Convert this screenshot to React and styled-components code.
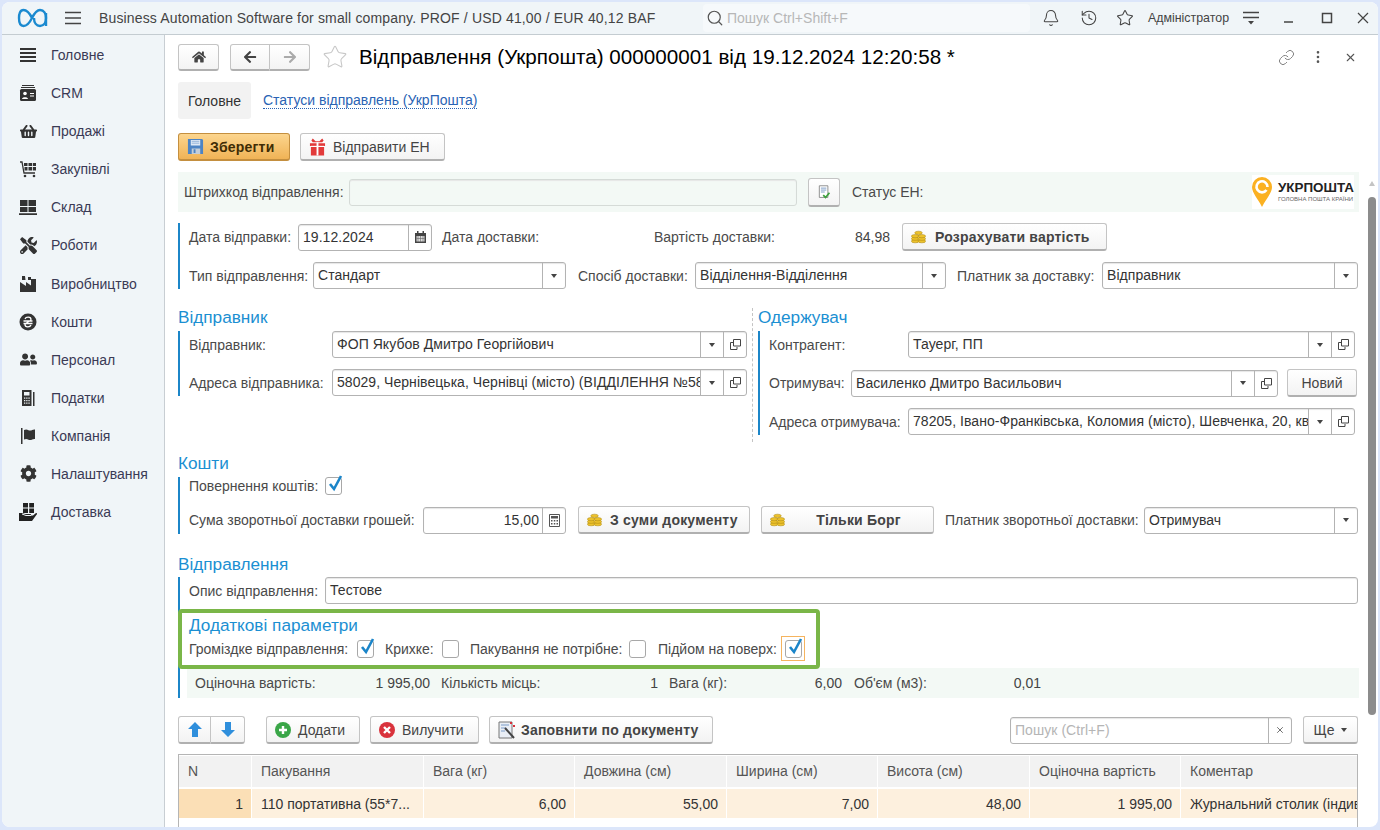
import React from 'react'
import styled, { createGlobalStyle } from 'styled-components'
import { Bell, History, Star, Search, Link, EllipsisVertical, X } from 'lucide-react'
import { FaShoppingBasket, FaTools, FaUserFriends, FaCog, FaHome, FaArrowLeft, FaArrowRight } from 'react-icons/fa'

const Global = createGlobalStyle`
  * { box-sizing: border-box; }
  html, body { margin: 0; padding: 0; width: 1380px; height: 830px; overflow: hidden; }
  body { font-family: "Liberation Sans", Arial, sans-serif; font-size: 14px; color: #444; }
`

const Frame = styled.div`
  width: 1380px;
  height: 830px;
  padding: 2px 2px 3px 2px;
  background: #dce6fa;
`
const Window = styled.div`
  height: 100%;
  display: flex;
  flex-direction: column;
  background: #fff;
  border-radius: 8px;
  overflow: hidden;
`
const TopBar = styled.header`
  height: 33px;
  flex: none;
  display: flex;
  align-items: center;
  background: #f0f5f8;
  border-bottom: 1px solid #c4ccd1;
  padding-left: 14px;
  color: #444;
  overflow: hidden;
`
const HeadTitle = styled.div`
  flex: none;
  width: 604px;
  margin-left: 3px;
  font-size: 14px;
  letter-spacing: 0.15px;
  white-space: nowrap;
`
const GlobalSearch = styled.div`
  flex: none;
  width: 327px;
  height: 28px;
  display: flex;
  align-items: center;
  gap: 3px;
  padding-left: 3px;
  border-radius: 4px;
  background: #f6f9fb;
  color: #b7b7b7;
  font-size: 14px;
  svg { color: #555; }
`
const TopIcon = styled.span`
  display: flex;
  justify-content: center;
  align-items: center;
  flex: none;
  width: ${p => p.$w || 37}px;
  color: #444;
`
const UserName = styled.span`
  flex: none;
  width: 90px;
  margin-left: 4px;
  font-size: 12.4px;
  color: #444;
  white-space: nowrap;
`
const Body = styled.div`
  flex: 1;
  min-height: 0;
  display: flex;
`
const Sidebar = styled.nav`
  width: 163px;
  flex: none;
  padding-top: 1px;
  background: #f0f5f8;
  border-right: 1px solid #c8ced3;
`
const NavItem = styled.div`
  height: 38.08px;
  display: flex;
  align-items: center;
  padding-left: 17px;
  gap: 14px;
  color: #3a3a55;
  font-size: 14px;
`
const NavIcon = styled.span`
  width: 18px;
  display: flex;
  justify-content: center;
  color: #333;
  font-size: 17px;
`
const Content = styled.main`
  flex: 1;
  min-width: 0;
  position: relative;
  overflow: hidden;
  padding: 9px 20px 0 13px;
`
const HeaderRow = styled.div`
  display: flex;
  align-items: center;
  height: 26px;
  margin-right: -8px;
`
const Title = styled.h1`
  margin: 0 0 0 11px;
  flex: 1;
  font-size: 20.65px;
  font-weight: 400;
  color: #000;
  white-space: nowrap;
`
const PlainIcon = styled.span`
  display: flex;
  justify-content: ${p => p.$end ? 'flex-end' : 'center'};
  width: ${p => p.$w || 32}px;
  color: #777;
`
const Btn = styled.button`
  display: flex;
  align-items: center;
  justify-content: ${p => p.$left ? 'flex-start' : 'center'};
  gap: ${p => p.$gap ?? 7}px;
  flex: none;
  width: ${p => p.$w}px;
  height: ${p => p.$h || 28}px;
  margin-left: ${p => p.$ml || 0}px;
  padding: 0 8px;
  font: ${p => p.$bold ? 700 : 400} 14px "Liberation Sans", Arial, sans-serif;
  letter-spacing: ${p => p.$bold ? '0.2px' : '0'};
  color: #444;
  background: linear-gradient(#fff, #f3f3f3);
  border: 1px solid #c4c4c4;
  border-bottom: 2px solid #b0b0b0;
  border-radius: 3px;
`
const SaveBtn = styled(Btn)`
  background: linear-gradient(#fcd58e, #f0b356);
  border-color: #c48f3f;
  color: #402c05;
`
const BtnCaption = styled.span`
  margin: 0 auto;
`
const BtnGroup = styled.div`
  display: flex;
  margin-left: ${p => p.$ml || 0}px;
  ${Btn} { border-radius: 0; }
  ${Btn}:first-child { border-radius: 3px 0 0 3px; }
  ${Btn}:last-child { border-radius: 0 3px 3px 0; border-left: 0; }
`
const Tabs = styled.div`
  display: flex;
  align-items: center;
  height: 37px;
  margin-top: 12px;
`
const ActiveTab = styled.div`
  width: 73px;
  height: 37px;
  display: flex;
  align-items: center;
  justify-content: center;
  background: #f2f2f2;
  border-radius: 3px;
  color: #333;
`
const TabLink = styled.a`
  margin-left: 12px;
  color: #2a63b4;
  border-bottom: 1px dotted #2a63b4;
  line-height: 15px;
`
const CommandBar = styled.div`
  display: flex;
  margin-top: 14px;
`
const Band = styled.div`
  display: flex;
  align-items: center;
  height: 40px;
  margin-top: 11px;
  margin-right: -1px;
  padding-left: 6px;
  background: #f3f9f5;
`
const Logo = styled.div`
  width: 102px;
  height: 34px;
  margin-left: auto;
  margin-right: 5px;
  display: flex;
  align-items: center;
  gap: 6px;
  background: #fff;
`
const LogoText = styled.div`
  display: flex;
  flex-direction: column;
  color: #222;
  font-size: 13.4px;
  font-weight: 700;
  line-height: 14px;
  white-space: nowrap;
  small { font-size: 6px; font-weight: 400; line-height: 8px; color: #666; }
`
const Group = styled.section`
  display: flex;
  flex-direction: column;
  gap: ${p => p.$gap ?? 11}px;
  margin-top: ${p => p.$mt || 0}px;
  padding-left: 9px;
  border-left: 2px solid #1c86c8;
`
const Row = styled.div`
  display: flex;
  align-items: center;
  min-height: ${p => p.$h || 27}px;
`
const Label = styled.span`
  flex: none;
  width: ${p => p.$w ? p.$w + 'px' : 'auto'};
  margin-left: ${p => p.$ml || 0}px;
  color: #4a4a4a;
  white-space: nowrap;
`
const Amount = styled.span`
  flex: none;
  width: ${p => p.$w}px;
  text-align: right;
  color: #444;
`
const Input = styled.div`
  flex: none;
  display: flex;
  width: ${p => p.$w}px;
  height: 27px;
  margin-left: ${p => p.$ml || 0}px;
  background: ${p => p.$bg || '#fff'};
  border: 1px solid ${p => p.$line || '#b3b3b3'};
  border-radius: 3px;
  box-shadow: inset 0 1px 1px #e6e6e6;
  color: #333;
  overflow: hidden;
`
const Value = styled.span`
  flex: 1;
  min-width: 0;
  padding: 0 3px 0 4px;
  line-height: 25px;
  letter-spacing: 0.05px;
  white-space: nowrap;
  overflow: hidden;
  text-align: ${p => p.$right ? 'right' : 'left'};
  color: ${p => p.$ph ? '#b5b5b5' : '#333'};
`
const Tail = styled.span`
  flex: none;
  width: ${p => p.$w || 23}px;
  display: flex;
  align-items: center;
  justify-content: center;
  border-left: 1px solid #b3b3b3;
  color: #555;
`
const Caret = styled.i`
  width: 0;
  height: 0;
  border: 3px solid transparent;
  border-top: 4px solid #444;
  border-bottom: 0;
`
const Heading = styled.h2`
  margin: ${p => p.$mt || 0}px 0 ${p => p.$mb ?? 5}px;
  color: #1b8fd2;
  font-size: 17.2px;
  font-weight: 400;
  line-height: 18px;
`
const Columns = styled.div`
  display: flex;
  margin-top: 19px;
`
const LeftCol = styled.div`
  width: 574px;
  flex: none;
`
const RightCol = styled.div`
  flex: 1;
  padding-left: 5px;
  height: 134px;
  border-left: 1px dashed #c4c4c4;
`
const Check = styled.span`
  flex: none;
  position: relative;
  display: block;
  width: 17px;
  height: 18px;
  margin-left: ${p => p.$ml ?? 7}px;
  background: #fff;
  border: 1px solid #a8a8a8;
  border-radius: 3px;
`
const Tick = styled.svg`
  position: absolute;
  left: 1px;
  top: -4px;
`
const Focus = styled.span`
  flex: none;
  display: flex;
  align-items: center;
  justify-content: center;
  width: 24px;
  height: 25px;
  margin-left: 3px;
  border: 1px solid #f5b45f;
`
const Highlight = styled.div`
  position: relative;
  z-index: 1;
  width: 642px;
  height: 60px;
  margin: 5px 0 0 -11px;
  padding-left: 7px;
  background: #fff;
  border: 4px solid #7ab648;
  border-radius: 4px;
`
const InnerHeading = styled(Heading)`
  margin: 3px 0 2px;
`
const Summary = styled.div`
  display: flex;
  align-items: center;
  height: 30px;
  margin: -1px -1px 0 -2px;
  padding-left: 8px;
  background: #f3f9f5;
`
const ToolBar = styled.div`
  display: flex;
  align-items: center;
  margin-top: 18px;
`
const Table = styled.div`
  margin-top: 10px;
  padding-top: 1px;
  height: 80px;
  border: 1px solid #b5b5b5;
  border-bottom: 0;
  display: grid;
  grid-template-columns: 72px 171px 150px 151px 150px 151px 150px 1fr;
  grid-template-rows: 31px 29px;
  gap: 2px 1px;
  overflow: hidden;
`
const HeadCell = styled.div`
  display: flex;
  align-items: center;
  padding: 0 0 2px 9px;
  background: #f2f2f2;
  color: #555;
`
const Cell = styled.div`
  padding: 0 8px 0 9px;
  line-height: 30px;
  white-space: nowrap;
  overflow: hidden;
  text-align: ${p => p.$right ? 'right' : 'left'};
  background: ${p => p.$key ? '#fbdfb6' : '#fdf0de'};
  color: #333;
`
const Scroll = styled.div`
  position: absolute;
  top: 162px;
  right: 2px;
  width: 8px;
  height: 518px;
  background: #8c8c8c;
  border-radius: 4px;
  &::before {
    content: "";
    position: absolute;
    top: -16px;
    left: 1px;
    border: 3px solid transparent;
    border-bottom: 5px solid #c4c4c4;
    border-top: 0;
  }
`

const Svg = ({ w = 18, h = 18, vb = '0 0 18 18', children }) => (
  <svg width={w} height={h} viewBox={vb}>{children}</svg>
)

const BrandLogo = () => (
  <svg width="34" height="22" viewBox="0 0 34 22" fill="none" stroke="#1b8ad0" strokeWidth="2.400">
    <path d="M16 11C13 5 10 3 7.500 3 4 3 3 7 3 11s1 8 4.500 8c2.500 0 5.500-2 8.500-8 3-6 5-8 8-8 4 0 6 3.500 6 8s-2 8-6 8c-3.500 0-6-3-6-8" />
    <path d="M30 6v13" />
  </svg>
)
const Burger = () => (
  <Svg w={16} h={14} vb="0 0 16 14">
    <path d="M0 1.500h16M0 7h16M0 12.500h16" stroke="#444" strokeWidth="1.300" />
  </Svg>
)
const FilterLines = () => (
  <Svg w={16} h={14} vb="0 0 16 14">
    <path d="M0 1.500h16M0 6.500h16" stroke="#444" strokeWidth="1.300" />
    <path d="M5 10h6l-3 3.500z" fill="#444" />
  </Svg>
)
const IconMenu = () => (
  <Svg><path d="M1 3h16M1 7h16M1 11h16M1 15h16" stroke="#333" strokeWidth="2" /></Svg>
)
const IconCrm = () => (
  <Svg>
    <path d="M3 1h12v1H3zM2 3h14v1H2z" fill="#333" />
    <rect x="1" y="5" width="16" height="12" rx="1.500" fill="#333" />
    <circle cx="6" cy="9.500" r="1.800" fill="#fff" />
    <path d="M3 15c0-2.500 6-2.500 6 0zM11 9h4v1h-4zM11 11.500h4v1h-4z" fill="#fff" />
  </Svg>
)
const IconBuy = () => (
  <Svg>
    <path d="M1 2h2l2 11h11" stroke="#333" fill="none" strokeWidth="1.300" />
    <path d="M5 3h3.500v3H5zM9.500 3H13v3H9.500zM13.800 3H17v3h-3.200zM5.500 7h3v3.500h-3zM9.500 7H13v3.500H9.500zM13.800 7H17v3.500h-3.200z" fill="#333" />
    <circle cx="6" cy="16" r="1.300" fill="#333" />
    <circle cx="15" cy="16" r="1.300" fill="#333" />
  </Svg>
)
const IconStock = () => (
  <Svg>
    <path d="M1 2h7.500v6H1zM9.500 2H17v6H9.500zM1 9h7.500v5H1zM9.500 9H17v5H9.500zM0 15.200h18v1.800H0z" fill="#333" />
  </Svg>
)
const IconFactory = () => (
  <Svg>
    <path d="M3 1h3l.500 4H3zM9 2h3v3H9zM1 17V7l6 4V7l5 3.500V4h5v13z" fill="#333" />
  </Svg>
)
const IconMoney = () => (
  <Svg>
    <circle cx="9" cy="9" r="8.500" fill="#333" />
    <path d="M6 6c1-2.500 6-2.500 6 .5 0 2.500-6 2.500-6 5 0 3 5 3 6 .5M4.500 8h9M4.500 10.500h9" stroke="#fff" strokeWidth="1.300" fill="none" />
  </Svg>
)
const IconTax = () => (
  <Svg>
    <path d="M3 1h9.500v16H3z" fill="#333" />
    <path d="M14 3h1.500v14H14z" fill="#333" />
    <path d="M5 3h5.500v3.500H5z" fill="#f0f5f8" />
    <path d="M5 8.500h1.300v1.300H5zM7.200 8.500h1.300v1.300H7.200zM9.400 8.500h1.300v1.300H9.400zM5 11h1.300v1.300H5zM7.200 11h1.300v1.300H7.200zM9.400 11h1.300v1.300H9.400zM5 13.500h1.300v1.300H5zM7.200 13.500h1.300v1.300H7.200zM9.400 13.500h1.300v1.300H9.400z" fill="#f0f5f8" />
  </Svg>
)
const IconFlag = () => (
  <Svg>
    <path d="M2 1h1.500v16H2zM5 3c3-1.500 4 .5 6 .5S14 2 16 2.500v9.500c-2-.5-3 1-5 1s-3-2-6-.5z" fill="#333" />
  </Svg>
)
const IconDelivery = () => (
  <Svg>
    <path d="M4 0h11v10H4z" fill="#222" />
    <path d="M9 0h1.200v10H9zM4 4.500h11v1H4z" fill="#f0f5f8" />
    <path d="M0 10h3l3 1h5c1.500 0 1.500 2 0 2H8l6-.5 3-2.500c1-.5 1.500 1 .5 1.800L13 18H0z" fill="#222" />
    <path d="M3 11l4 1.500h5" stroke="#f0f5f8" fill="none" />
  </Svg>
)
const IconSave = () => (
  <Svg w={17} h={17}>
    <path d="M1 1h15l1 1v15H1z" fill="#4d84c4" />
    <path d="M4 2h10v6H4z" fill="#dfe9f5" />
    <path d="M5 3.500h8M5 5.500h8" stroke="#8fb1d8" />
    <path d="M5 11h9v6H5z" fill="#c3cdd8" />
    <path d="M7 12h2v4H7z" fill="#4d84c4" />
  </Svg>
)
const IconGift = () => (
  <Svg w={17} h={18}>
    <path d="M4 0l3 3h4l3-3 1.500 2L14 4H4L2.500 2z" fill="#e23a3a" />
    <path d="M1 5h16v3H1zM2 9h14v9H2z" fill="#e23a3a" />
    <path d="M8 4h2v14H8z" fill="#fff" />
    <path d="M2 8.300h14" stroke="#fff" />
  </Svg>
)
const IconCoins = () => (
  <Svg w={15} h={14} vb="0 0 18 16">
    <g fill="#edc22c" stroke="#a6830f" strokeWidth=".6">
      <ellipse cx="5" cy="13" rx="4.500" ry="2" />
      <ellipse cx="5" cy="10" rx="4.500" ry="2" />
      <ellipse cx="5" cy="7" rx="4.500" ry="2" />
      <ellipse cx="13" cy="13" rx="4.500" ry="2" />
      <ellipse cx="13" cy="10" rx="4.500" ry="2" />
      <ellipse cx="13" cy="7" rx="4.500" ry="2" />
      <ellipse cx="9" cy="3" rx="4.500" ry="2" />
    </g>
  </Svg>
)
const IconDocCheck = () => (
  <Svg>
    <path d="M3 1h11v15H3z" fill="#fff" stroke="#777" />
    <path d="M5 4h7M5 6.500h7M5 9h5" stroke="#5c83b8" />
    <path d="M8 13l3 3 5-6" stroke="#3da13d" strokeWidth="2.200" fill="none" />
  </Svg>
)
const IconCalendar = () => (
  <Svg w={11} h={12} vb="0 0 11 12">
    <path d="M0 2h11v10H0z" fill="#444" />
    <path d="M2 0h1.500v3H2zM7.500 0H9v3H7.500z" fill="#444" />
    <path d="M1.500 5h8v5.500h-8z" fill="#ddd" />
    <path d="M3 5v6M5.500 5v6M8 5v6M1.500 7.500h8" stroke="#666" strokeWidth=".6" />
  </Svg>
)
const IconCalc = () => (
  <Svg w={11} h={13} vb="0 0 11 13">
    <path d="M.5.500h10v12H.5z" fill="#fff" stroke="#555" />
    <path d="M2 2h7v2.500H2z" fill="#555" />
    <path d="M2 6h1.500v1.500H2zM4.800 6h1.500v1.500H4.800zM7.500 6H9v1.500H7.500zM2 9h1.500v1.500H2zM4.800 9h1.500v1.500H4.800zM7.500 9H9v1.500H7.500z" fill="#555" />
  </Svg>
)
const IconOpen = () => (
  <Svg w={11} h={11} vb="0 0 11 11">
    <path d="M3.500.500h7v6.500h-7z" fill="none" stroke="#444" />
    <path d="M.5 3.500h3M.5 3.500v7h6.500V8" fill="none" stroke="#444" />
  </Svg>
)
const IconPlus = () => (
  <Svg w={16} h={16} vb="0 0 16 16">
    <circle cx="8" cy="8" r="8" fill="#3aa648" />
    <path d="M4 8h8M8 4v8" stroke="#fff" strokeWidth="2.400" />
  </Svg>
)
const IconCross = () => (
  <Svg w={16} h={16} vb="0 0 16 16">
    <circle cx="8" cy="8" r="8" fill="#d9323c" />
    <path d="M5 5l6 6M11 5l-6 6" stroke="#fff" strokeWidth="2.400" />
  </Svg>
)
const IconFill = () => (
  <Svg>
    <path d="M1 1h13v16H1z" fill="#e9eef5" stroke="#777" />
    <path d="M3 4h8M3 7h5M3 10h4" stroke="#7a9cc8" />
    <path d="M7 7l9 10" stroke="#444" strokeWidth="2" />
    <path d="M12 1h2v2h-2zM15 4h2v2h-2z" fill="#d9323c" />
  </Svg>
)
const BlockArrow = ({ down }) => (
  <Svg w={14} h={15} vb="0 0 14 15">
    <path d={down ? 'M4 0h6v8h4l-7 7-7-7h4z' : 'M7 0l7 7h-4v8H4V7H0z'} fill="#2f8fdc" />
  </Svg>
)
const Pin = () => (
  <svg width="20" height="30" viewBox="0 0 20 30">
    <path d="M10 0a10 10 0 0 1 10 10c0 6-6 12-10 20C6 22 0 16 0 10A10 10 0 0 1 10 0z" fill="#fbb122" />
    <path d="M14.500 13a5.500 5.500 0 1 1 1-3" fill="none" stroke="#fff" strokeWidth="2.600" />
  </svg>
)
const Checked = ({ on, ml }) => (
  <Check $ml={ml}>
    {on && (
      <Tick width="17" height="19" viewBox="0 0 17 19">
        <path d="M3 10l4 5 7-13" fill="none" stroke="#1b85c9" strokeWidth="2.600" />
      </Tick>
    )}
  </Check>
)

const menu = [
  ['Головне', <IconMenu />],
  ['CRM', <IconCrm />],
  ['Продажі', <FaShoppingBasket />],
  ['Закупівлі', <IconBuy />],
  ['Склад', <IconStock />],
  ['Роботи', <FaTools />],
  ['Виробництво', <IconFactory />],
  ['Кошти', <IconMoney />],
  ['Персонал', <FaUserFriends />],
  ['Податки', <IconTax />],
  ['Компанія', <IconFlag />],
  ['Налаштування', <FaCog />],
  ['Доставка', <IconDelivery />],
]

const columns = ['N', 'Пакування', 'Вага (кг)', 'Довжина (см)', 'Ширина (см)', 'Висота (см)', 'Оціночна вартість', 'Коментар']

function Select({ w, ml, children, open }) {
  return (
    <Input $w={w} $ml={ml}>
      <Value>{children}</Value>
      <Tail><Caret /></Tail>
      {open && <Tail><IconOpen /></Tail>}
    </Input>
  )
}

export default function App() {
  return (
    <Frame>
      <Global />
      <Window>
        <TopBar>
          <TopIcon $w={34}><BrandLogo /></TopIcon>
          <TopIcon $w={46}><Burger /></TopIcon>
          <HeadTitle>Business Automation Software for small company. PROF / USD 41,00 / EUR 40,12 BAF</HeadTitle>
          <GlobalSearch><Search size={18} strokeWidth={1.6} />Пошук Ctrl+Shift+F</GlobalSearch>
          <TopIcon $w={42}><Bell size={18} strokeWidth={1.4} /></TopIcon>
          <TopIcon $w={34}><History size={18} strokeWidth={1.4} /></TopIcon>
          <TopIcon $w={38}><Star size={18} strokeWidth={1.4} /></TopIcon>
          <UserName>Адміністратор</UserName>
          <TopIcon $w={26}><FilterLines /></TopIcon>
          <TopIcon $w={50}><Svg w={12} h={12} vb="0 0 12 12"><path d="M1 10h9" stroke="#444" strokeWidth="1.500" /></Svg></TopIcon>
          <TopIcon $w={26}><Svg w={12} h={12} vb="0 0 12 12"><path d="M1.500 1.500h9v9h-9z" fill="none" stroke="#444" strokeWidth="1.500" /></Svg></TopIcon>
          <TopIcon $w={46}><Svg w={12} h={12} vb="0 0 12 12"><path d="M1 1l10 10M11 1L1 11" stroke="#444" strokeWidth="1.200" /></Svg></TopIcon>
        </TopBar>
        <Body>
          <Sidebar>
            {menu.map(([name, icon]) => (
              <NavItem key={name}><NavIcon>{icon}</NavIcon>{name}</NavItem>
            ))}
          </Sidebar>
          <Content>
            <HeaderRow>
              <Btn $w={41} $h={27}><FaHome /></Btn>
              <BtnGroup $ml={11}>
                <Btn $w={40} $h={27}><FaArrowLeft /></Btn>
                <Btn $w={40} $h={27}><FaArrowRight color="#aaa" /></Btn>
              </BtnGroup>
              <PlainIcon $w={38} $end><Star size={26} strokeWidth={1} color="#c8c8c8" /></PlainIcon>
              <Title>Відправлення (Укрпошта) 000000001 від 19.12.2024 12:20:58 *</Title>
              <PlainIcon><Link size={17} strokeWidth={1.3} /></PlainIcon>
              <PlainIcon><EllipsisVertical size={16} color="#555" /></PlainIcon>
              <PlainIcon><X size={13} color="#555" /></PlainIcon>
            </HeaderRow>

            <Tabs>
              <ActiveTab>Головне</ActiveTab>
              <TabLink>Статуси відправлень (УкрПошта)</TabLink>
            </Tabs>

            <CommandBar>
              <SaveBtn $w={112} $bold $left $gap={6}><IconSave />Зберегти</SaveBtn>
              <Btn $w={145} $ml={10} $left><IconGift />Відправити ЕН</Btn>
            </CommandBar>

            <Band>
              <Label $w={165}>Штрихкод відправлення:</Label>
              <Input $w={448} $bg="#f3f9f5" $line="#d5dbd7"><Value /></Input>
              <Btn $w={32} $ml={11} $h={29}><IconDocCheck /></Btn>
              <Label $ml={12}>Статус ЕН:</Label>
              <Logo>
                <Pin />
                <LogoText>УКРПОШТА<small>ГОЛОВНА ПОШТА КРАЇНИ</small></LogoText>
              </Logo>
            </Band>

            <Group $mt={11}>
              <Row>
                <Label $w={109}>Дата відправки:</Label>
                <Input $w={134}><Value>19.12.2024</Value><Tail><IconCalendar /></Tail></Input>
                <Label $w={212} $ml={10}>Дата доставки:</Label>
                <Label $w={150}>Вартість доставки:</Label>
                <Amount $w={86}>84,98</Amount>
                <Btn $w={205} $ml={12} $bold $left $gap={9}><IconCoins />Розрахувати вартість</Btn>
              </Row>
              <Row>
                <Label $w={124}>Тип відправлення:</Label>
                <Select w={253}>Стандарт</Select>
                <Label $w={117} $ml={12}>Спосіб доставки:</Label>
                <Select w={251}>Відділення-Відділення</Select>
                <Label $w={145} $ml={11}>Платник за доставку:</Label>
                <Select w={256}>Відправник</Select>
              </Row>
            </Group>

            <Columns>
              <LeftCol>
                <Heading>Відправник</Heading>
                <Group>
                  <Row>
                    <Label $w={143}>Відправник:</Label>
                    <Select w={415} open>ФОП Якубов Дмитро Георгійович</Select>
                  </Row>
                  <Row>
                    <Label $w={143}>Адреса відправника:</Label>
                    <Select w={415} open>58029, Чернівецька, Чернівці (місто) (ВІДДІЛЕННЯ №58)</Select>
                  </Row>
                </Group>
              </LeftCol>
              <RightCol>
                <Heading>Одержувач</Heading>
                <Group>
                  <Row>
                    <Label $w={139}>Контрагент:</Label>
                    <Select w={447} open>Тауерг, ПП</Select>
                  </Row>
                  <Row>
                    <Label $w={82}>Отримувач:</Label>
                    <Select w={427} open>Василенко Дмитро Васильович</Select>
                    <Btn $w={70} $ml={9}>Новий</Btn>
                  </Row>
                  <Row>
                    <Label $w={139}>Адреса отримувача:</Label>
                    <Select w={447} open>78205, Івано-Франківська, Коломия (місто), Шевченка, 20, кв. 2</Select>
                  </Row>
                </Group>
              </RightCol>
            </Columns>

            <Heading $mt={12}>Кошти</Heading>
            <Group>
              <Row $h={18}>
                <Label>Повернення коштів:</Label>
                <Checked on />
              </Row>
              <Row>
                <Label $w={234}>Сума зворотньої доставки грошей:</Label>
                <Input $w={143}><Value $right>15,00</Value><Tail><IconCalc /></Tail></Input>
                <Btn $w={172} $ml={12} $bold $left $gap={8}><IconCoins />З суми документу</Btn>
                <Btn $w={173} $ml={11} $bold $left><IconCoins /><BtnCaption>Тільки Борг</BtnCaption></Btn>
                <Label $w={199} $ml={11}>Платник зворотньої доставки:</Label>
                <Select w={214}>Отримувач</Select>
              </Row>
            </Group>

            <Heading $mt={21} $mb={4}>Відправлення</Heading>
            <Group $gap={0}>
              <Row>
                <Label $w={136}>Опис відправлення:</Label>
                <Input $w={1033}><Value>Тестове</Value></Input>
              </Row>
              <Highlight>
                <InnerHeading>Додаткові параметри</InnerHeading>
                <Row $h={18}>
                  <Label $w={168}>Громіздке відправлення:</Label>
                  <Checked on ml={0} />
                  <Label $w={57} $ml={11}>Крихке:</Label>
                  <Checked ml={0} />
                  <Label $w={159} $ml={11}>Пакування не потрібне:</Label>
                  <Checked ml={0} />
                  <Label $w={120} $ml={12}>Підйом на поверх:</Label>
                  <Focus><Checked on ml={0} /></Focus>
                </Row>
              </Highlight>
              <Summary>
                <Label $w={124}>Оціночна вартість:</Label>
                <Amount $w={111}>1 995,00</Amount>
                <Label $w={120} $ml={11}>Кількість місць:</Label>
                <Amount $w={97}>1</Amount>
                <Label $w={80} $ml={11}>Вага (кг):</Label>
                <Amount $w={93}>6,00</Amount>
                <Label $w={100} $ml={12}>Об'єм (м3):</Label>
                <Amount $w={87}>0,01</Amount>
              </Summary>
            </Group>

            <ToolBar>
              <BtnGroup>
                <Btn $w={33}><BlockArrow /></Btn>
                <Btn $w={34}><BlockArrow down /></Btn>
              </BtnGroup>
              <Btn $w={94} $ml={21} $left><IconPlus />Додати</Btn>
              <Btn $w={109} $ml={10} $left><IconCross />Вилучити</Btn>
              <Btn $w={224} $ml={10} $bold $left $gap={5}><IconFill />Заповнити по документу</Btn>
              <Input $w={282} $ml={297}>
                <Value $ph>Пошук (Ctrl+F)</Value>
                <Tail><X size={10} /></Tail>
              </Input>
              <Btn $w={55} $ml={11}>Ще <Caret /></Btn>
            </ToolBar>

            <Table>
              {columns.map(c => <HeadCell key={c}>{c}</HeadCell>)}
              <Cell $key $right>1</Cell>
              <Cell>110 портативна (55*7...</Cell>
              <Cell $right>6,00</Cell>
              <Cell $right>55,00</Cell>
              <Cell $right>7,00</Cell>
              <Cell $right>48,00</Cell>
              <Cell $right>1 995,00</Cell>
              <Cell>Журнальний столик (індивідуальний)</Cell>
            </Table>
            <Scroll />
          </Content>
        </Body>
      </Window>
    </Frame>
  )
}
